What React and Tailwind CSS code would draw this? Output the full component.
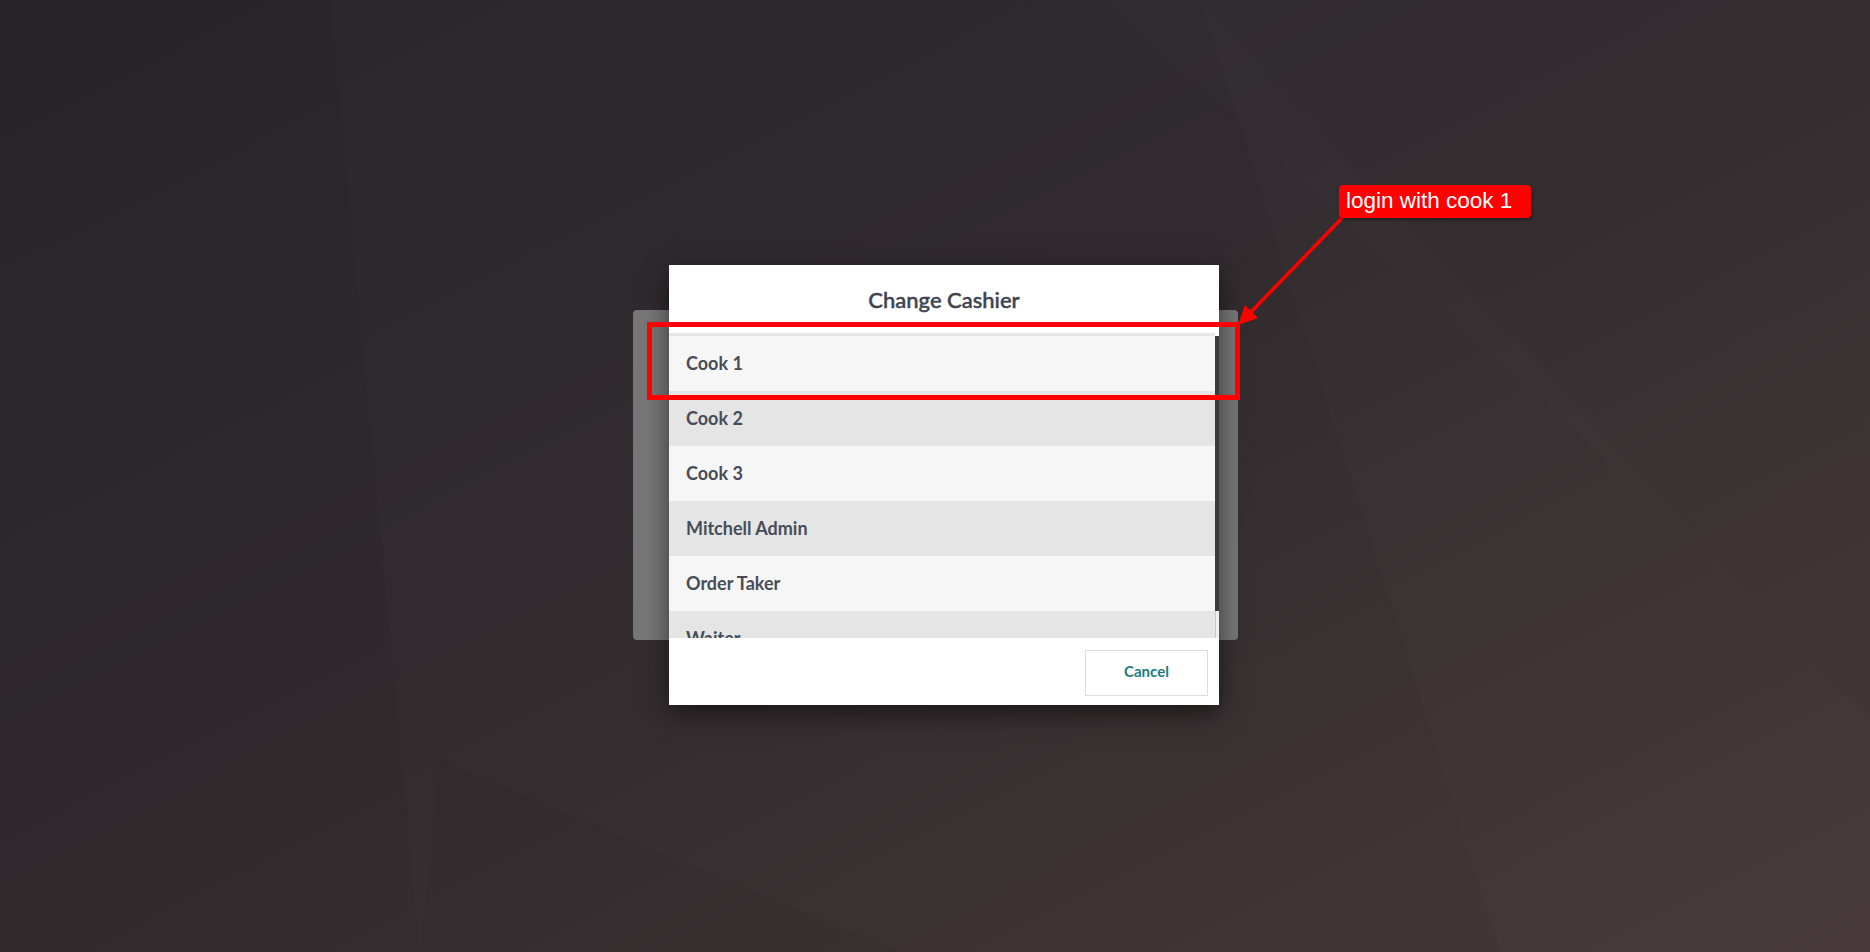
import React from 'react';

const cashiers = ['Cook 1', 'Cook 2', 'Cook 3', 'Mitchell Admin', 'Order Taker', 'Waiter'];

function Backdrop() {
  // faint facets of the POS background
  return (
    <svg className="absolute inset-0 w-full h-full" viewBox="0 0 1870 952" preserveAspectRatio="none">
      <polygon points="0,0 330,0 420,952 0,952" fill="#000" opacity="0.03" />
      <polygon points="1100,0 1870,0 1870,700" fill="#fff" opacity="0.008" />
      <polygon points="1200,0 1870,720 1870,952 1500,952" fill="#fff" opacity="0.01" />
      <polygon points="420,952 440,760 900,952" fill="#000" opacity="0.03" />
    </svg>
  );
}

function CashierModal() {
  return (
    <div className="absolute left-[669px] top-[265px] w-[550px] h-[440px] bg-white flex flex-col shadow-[0_8px_24px_rgba(0,0,0,0.55)]">
      <div className="h-[68px] flex items-center justify-center pt-[1px]">
        <h2 className="text-[22px] font-medium text-[#3e4450] [-webkit-text-stroke:0.45px_#3e4450]">Change Cashier</h2>
      </div>
      <div className="flex h-[305px] overflow-hidden">
        <div className="flex-1 flex flex-col">
          <div className="h-[3px] bg-[#e6e6e6] shrink-0" />
          {cashiers.map((name, i) => (
            <div
              key={name}
              className={`h-[55px] shrink-0 flex items-center pl-[17px] text-[18px] font-bold text-[#474d58] ${i % 2 === 0 ? 'bg-[#f6f6f6]' : 'bg-[#e5e5e5]'}`}
            >
              {name}
            </div>
          ))}
        </div>
        <div className="w-[4px] flex flex-col">
          <div className="h-[3px] bg-white" />
          <div className="h-[275px] bg-[#3a3a3a]" />
          <div className="flex-1 bg-[#f0f0f0] border-l border-[#c8c8c8]" />
        </div>
      </div>
      <div className="flex-1 flex items-start justify-end pt-[12px] pr-[11px]">
        <button className="w-[123px] h-[46px] pb-[3px] border border-[#dcdcdc] text-[15px] font-bold text-[#1b7c81]">
          Cancel
        </button>
      </div>
    </div>
  );
}

function Annotation() {
  return (
    <>
      <div className="absolute left-[647px] top-[322px] w-[593px] h-[78px] border-[5px] border-[#ff0000]" />
      <svg className="absolute left-0 top-0 w-[1870px] h-[952px] pointer-events-none" viewBox="0 0 1870 952">
        <line x1="1343" y1="217" x2="1250" y2="313" stroke="#ff0000" strokeWidth="3.5" />
        <polygon points="1238,325 1245,305 1258,318" fill="#ff0000" />
      </svg>
      <div className="absolute left-[1339px] top-[185px] w-[192px] h-[33px] rounded-[4px] bg-[#ff0000] pl-[7px] flex items-center shadow-[1px_2px_3px_rgba(0,0,0,0.35)]">
        <span className="text-[22.5px] leading-none text-white font-['Liberation_Sans',Arial,sans-serif]">login with cook 1</span>
      </div>
    </>
  );
}

export default function App() {
  return (
    <div className="relative w-full h-[952px] overflow-hidden bg-gradient-to-br from-[#29262a] via-[#322c2f] to-[#463839] font-['Lato','Noto_Sans',sans-serif]">
      <Backdrop />
      <div className="relative pt-[310px] pl-[633px]">
        <div className="w-[605px] h-[330px] rounded-[4px] bg-[#777777]" />
      </div>
      <CashierModal />
      <Annotation />
    </div>
  );
}
